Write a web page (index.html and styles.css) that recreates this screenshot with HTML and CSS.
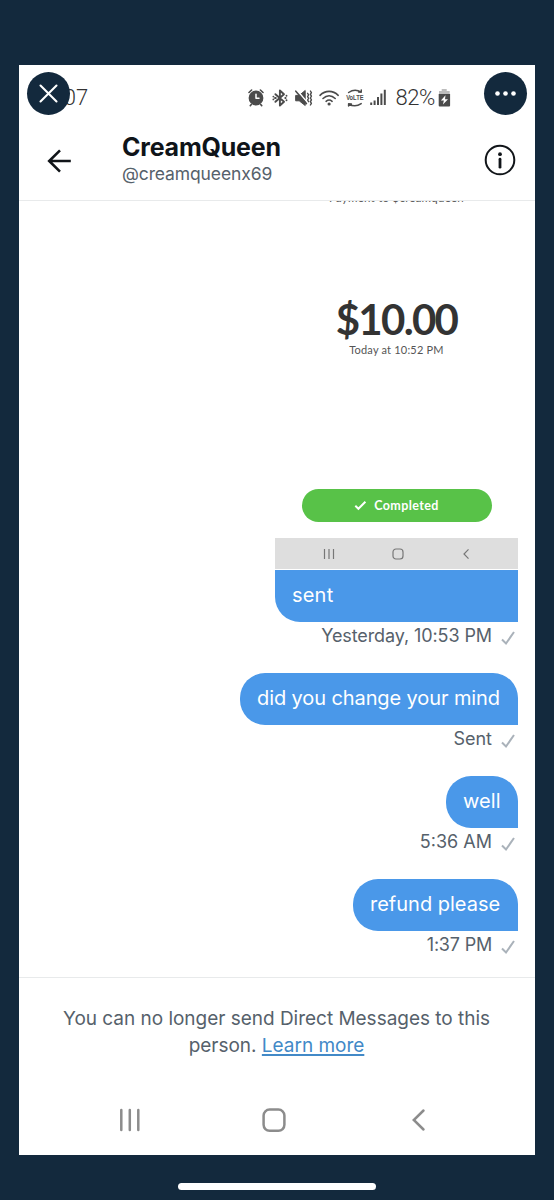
FILE: index.html
```html
<!DOCTYPE html>
<html lang="en">
<head>
<meta charset="utf-8">
<meta name="viewport" content="width=device-width">
<title>CreamQueen</title>
<link rel="stylesheet" href="styles.css">
</head>
<body>
<main class="phone">
  <div class="status">
    <span class="clock">1:07</span>
    <svg class="status-icons" width="142" height="24" viewBox="0 0 142 24" fill="none" stroke="#4b4b4b" stroke-width="1.6" stroke-linecap="round" stroke-linejoin="round">
      <g>
        <circle cx="9" cy="12" r="6.6" fill="#4b4b4b"/>
        <path d="M2 6.5 4.6 4M16 6.5 13.4 4M4.3 18.5 3.3 19.6M13.7 18.5 14.7 19.6"/>
        <path d="M9 8.2V12.2H12" stroke="#fff" stroke-width="1.5"/>
      </g>
      <path d="M28.4 8.2 37 15.8 32.9 19.5V4.5L37 8.2 28.4 15.8M26.4 10.6v0M26.4 13.4v0M28 12h.8M38.3 12h.3M39.5 9.7v0M39.5 14.3v0" stroke-width="1.9"/>
      <g>
        <path d="M49 9.4h3.2L58.2 4.5V19.5L52.2 14.8H49Z" fill="#4b4b4b" stroke-width="1"/>
        <path d="M50 4.2 61 17.2" stroke="#fff" stroke-width="1.6"/>
        <path d="M48.8 5.2 59.4 17.6"/>
        <path d="m60.6 7.3 1 1.6-1 1.7 1 1.7-1 1.7 1 1.7M63.4 5l1 1.6-1 1.8 1 1.8-1 1.8 1 1.8-1 1.8 1 1.8-1 1.6" stroke-width="1.4"/>
      </g>
      <path d="M73 9.3C78.4 4.1 85.8 4.1 91.2 9.3M76 12.5C79.7 9 84.5 9 88.2 12.5M79.1 15.3C81 13.7 83.2 13.7 85.1 15.3"/>
      <circle cx="82.1" cy="18" r=".8" fill="#4b4b4b"/>
      <path d="M101.6 6.5Q108 2 114.2 6.2M111.6 6.1l2.6.1.1-2.3M114.2 17.6Q108 22 101.6 17.8M104.4 18.1l-2.8-.3v2.3" stroke-width="1.5"/>
      <text x="99.2" y="14.4" class="volte" textLength="17.4" lengthAdjust="spacingAndGlyphs">VoLTE</text>
      <path d="M124.2 16.5V18.9M127.6 14.4V18.9M131 11V18.9M134.4 7.5V18.9M137.8 3.8V18.9" stroke-width="2" stroke-linecap="butt"/>
    </svg>
    <span class="percent">82%</span>
    <svg class="battery" width="13" height="20" viewBox="0 0 13 20"><path d="M3.7 1h5v2h3v3H1V3h2.7Z" fill="#bdbdbd"/><path d="M.7 6h11.4v11.5q0 1-1 1H1.7q-1 0-1-1Z" fill="#4b4b4b"/><path d="M7.5 7.3 2.9 12.5h3l-1 4L10 11.3H7Z" fill="#fff"/></svg>
  </div>

  <header class="profile">
    <svg class="back" width="28" height="28" viewBox="0 0 28 28" fill="none" stroke="#111519" stroke-width="2.6"><path d="M25.8 14H4M15 3.4 4.2 14 15 24.6"/></svg>
    <div class="person"><h1>CreamQueen</h1><p>@creamqueenx69</p></div>
    <svg class="info" width="34" height="34" viewBox="0 0 34 34"><circle cx="17" cy="17" r="14.3" fill="none" stroke="#111519" stroke-width="2"/><circle cx="17" cy="11.2" r="1.9" fill="#111519"/><path d="M17 16.2v8" stroke="#111519" stroke-width="2.8" stroke-linecap="round"/></svg>
  </header>

  <section class="thread">
    <article class="payment">
      <div class="recipient"><span>Payment to $creamqueen</span></div>
      <div class="amount">$10.00</div>
      <div class="paid-at">Today at 10:52 PM</div>
      <div class="completed"><svg width="13" height="11" viewBox="0 0 13 11"><path d="m1.3 5.8 3.1 3 7-7" fill="none" stroke="#fff" stroke-width="2"/></svg><span>Completed</span></div>
      <div class="mini-nav">
        <svg width="12" height="12" viewBox="0 0 12 12"><path d="M1.5 1v10M6 1v10M10.5 1v10"/></svg>
        <svg width="12" height="12" viewBox="0 0 12 12"><rect x="1" y="1" width="10" height="10" rx="3"/></svg>
        <svg width="12" height="12" viewBox="0 0 12 12"><path d="M8.5 1.3 4 6l4.5 4.7"/></svg>
      </div>
    </article>
    <div class="bubble attached"><span>sent</span></div>
    <div class="meta m-date"><span>Yesterday, 10:53 PM</span><svg class="tick" viewBox="0 0 14 16"><path d="m1 9.5 4 4L13 2"/></svg></div>
    <div class="bubble b-mind"><span>did you change your mind</span></div>
    <div class="meta"><span>Sent</span><svg class="tick" viewBox="0 0 14 16"><path d="m1 9.5 4 4L13 2"/></svg></div>
    <div class="bubble b-well"><span>well</span></div>
    <div class="meta"><span>5:36 AM</span><svg class="tick" viewBox="0 0 14 16"><path d="m1 9.5 4 4L13 2"/></svg></div>
    <div class="bubble b-refund"><span>refund please</span></div>
    <div class="meta m-last"><span>1:37 PM</span><svg class="tick" viewBox="0 0 14 16"><path d="m1 9.5 4 4L13 2"/></svg></div>
  </section>

  <footer class="notice">You can no longer send Direct Messages to this<br>person. <a href="#">Learn more</a></footer>
  <nav class="nav">
    <svg width="26" height="26" viewBox="0 0 26 26"><path d="M4.3 3v20M12.8 3v20M21.3 3v20"/></svg>
    <svg width="26" height="26" viewBox="0 0 26 26"><rect x="2.6" y="2.6" width="20.8" height="21.2" rx="6"/></svg>
    <svg width="26" height="26" viewBox="0 0 26 26"><path d="M19.5 3.5 9.8 13l9.7 9.5"/></svg>
  </nav>
</main>
<div class="home-bar"></div>
<button class="round close" aria-label="Close"><svg width="43" height="43" viewBox="0 0 43 43"><path d="m13.5 13.5 16 16M29.5 13.5l-16 16" stroke="#fff" stroke-width="2.1" stroke-linecap="round"/></svg></button>
<button class="round more" aria-label="More"><svg width="43" height="43" viewBox="0 0 43 43" fill="#fff"><circle cx="13.5" cy="21.5" r="2.3"/><circle cx="21.5" cy="21.5" r="2.3"/><circle cx="29.5" cy="21.5" r="2.3"/></svg></button>
</body>
</html>
```
FILE: styles.css
```css
* { box-sizing: border-box; }
body { margin: 0; height: 1200px; overflow: hidden; position: relative; padding: 64.5px 19.5px 0 18.5px; background: #13293d; font-family: Inter, "Liberation Sans", sans-serif; color: #56616b; }
svg { display: block; flex: none; }
.phone { height: 1090px; background: #fff; display: flex; flex-direction: column; }
.status { height: 66px; flex: none; display: flex; align-items: center; padding-left: 28.5px; }
.clock { width: 200px; font: 22px Roboto, sans-serif; font-weight: 300; color: #333; }
.volte { font: bold 7px "Liberation Sans", sans-serif; fill: #4b4b4b; stroke: none; }
.percent { margin-left: 6.5px; width: 41px; font: 22px Roboto, sans-serif; font-weight: 300; color: #333; letter-spacing: -.4px; white-space: nowrap; }
.battery { margin-left: 1px; }
.profile { height: 70px; flex: none; border-bottom: 1px solid #e8eaeb; display: flex; align-items: flex-start; padding-left: 26.5px; }
.back { margin-top: 16px; }
.person { width: 364px; margin-left: 49px; padding-top: .5px; }
.person h1 { margin: 0; font-size: 25px; line-height: 32px; font-weight: 700; color: #0f1419; letter-spacing: -.2px; }
.person p { margin: 0; font-size: 17.5px; line-height: 21px; letter-spacing: -.12px; }
.info { margin: 12.5px 0 0 -3px; }
.thread { height: 776px; flex: none; display: flex; flex-direction: column; align-items: flex-end; padding-right: 16.5px; }
.payment { width: 243px; height: 369px; flex: none; display: flex; flex-direction: column; align-items: center; font-family: Lato, sans-serif; color: #333; }
.recipient { width: 100%; height: 7px; overflow: hidden; text-align: center; font-size: 11.5px; line-height: 14px; letter-spacing: .25px; color: #555; }
.recipient span { display: block; margin-top: -9.5px; }
.amount { margin-top: 87px; font-size: 42px; line-height: 48px; font-weight: 700; letter-spacing: -1.7px; }
.paid-at { font-size: 11px; line-height: 14px; letter-spacing: .2px; color: #555; }
.completed { width: 190px; height: 33px; margin-top: 132px; border-radius: 17px; background: #58c248; display: flex; align-items: center; justify-content: center; gap: 7px; color: #fff; font-size: 12.5px; font-weight: 700; letter-spacing: .4px; }
.mini-nav { margin-top: 16px; width: 100%; height: 31px; background: #dedede; display: flex; align-items: center; justify-content: space-between; padding: 2px 46px 0 48px; fill: none; stroke: #777; stroke-width: 1.2; }
.bubble { height: 52px; flex: none; display: flex; align-items: center; padding: 0 17px 2px; border-radius: 25px 25px 0 25px; background: #4a98e9; color: #fff; font-size: 20px; letter-spacing: -.05px; white-space: nowrap; }
.attached { width: 243px; border-radius: 0 0 0 25px; letter-spacing: .2px; }
.b-mind { width: 278px; letter-spacing: -.1px; }
.b-well { width: 72px; letter-spacing: .1px; }
.b-refund { width: 165px; letter-spacing: 0; }
.meta { height: 51px; flex: none; display: flex; padding: 1.5px 3px 0 0; gap: 9px; font-size: 18px; line-height: 25px; }
.m-date { letter-spacing: -.1px; }
.m-last { letter-spacing: -.2px; }
.tick { width: 14px; height: 16px; margin-top: 6.5px; fill: none; stroke: #aab2ba; stroke-width: 2; }
.notice { height: 105px; flex: none; border-top: 1px solid #e8eaeb; padding-top: 27.5px; font-size: 19px; line-height: 27px; text-align: center; white-space: nowrap; letter-spacing: -.02px; }
.notice a { color: #4289c7; text-decoration: underline; text-underline-offset: 2px; text-decoration-thickness: 1.5px; }
.nav { display: flex; justify-content: space-between; padding: 25.5px 104.5px 0 98.5px; fill: none; stroke: #8c8c8c; stroke-width: 2.5; stroke-linecap: round; }
.home-bar { width: 198px; height: 7px; margin: 28px auto 0; border-radius: 4px; background: #fff; }
.round { position: absolute; top: 72px; width: 43px; height: 43px; border: 0; border-radius: 50%; padding: 0; background: #13293d; }
.close { left: 26.5px; }
.more { right: 27px; }
```
